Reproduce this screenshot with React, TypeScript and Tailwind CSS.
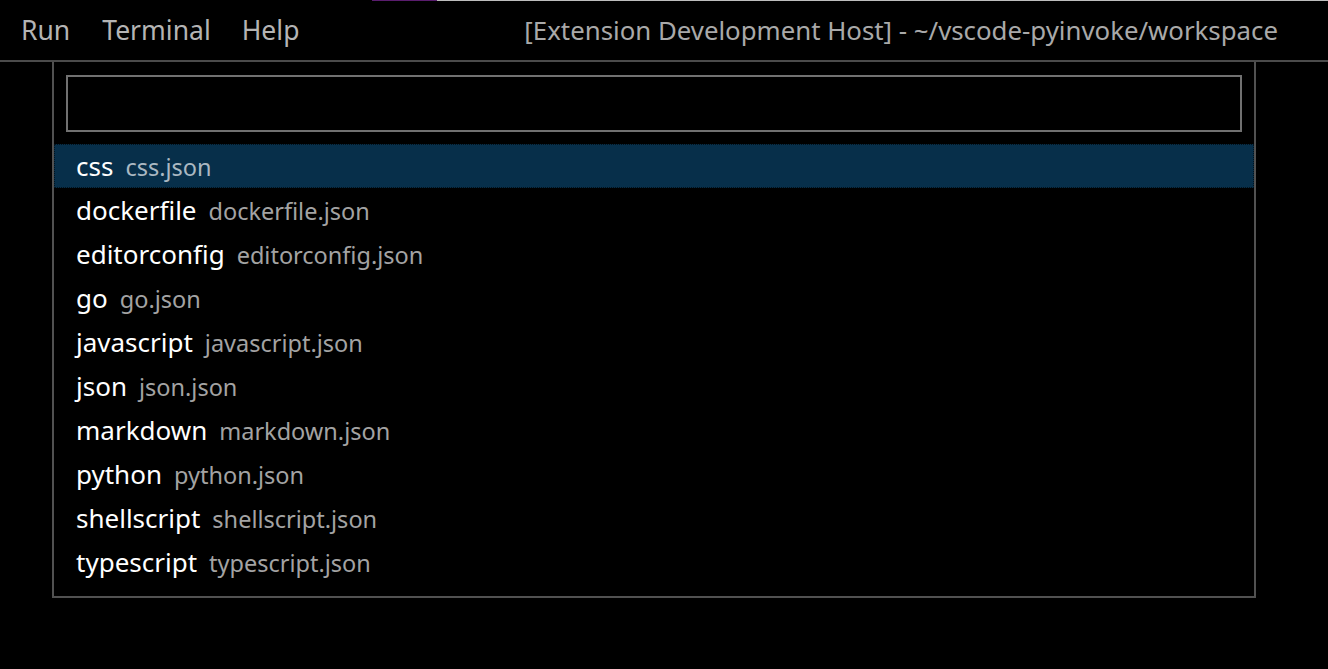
const items: [string, string][] = [
  ['css', 'css.json'],
  ['dockerfile', 'dockerfile.json'],
  ['editorconfig', 'editorconfig.json'],
  ['go', 'go.json'],
  ['javascript', 'javascript.json'],
  ['json', 'json.json'],
  ['markdown', 'markdown.json'],
  ['python', 'python.json'],
  ['shellscript', 'shellscript.json'],
  ['typescript', 'typescript.json'],
];

const font = "font-['Noto_Sans','Lato',sans-serif]";

function MenuBar() {
  return (
    <div>
      <div className="flex h-px">
        <div className="w-[372px]" />
        <div className="w-[65px] bg-[#5a1d6e]" />
        <div className="flex-1 bg-[#bdbdbd]" />
      </div>
      <div className="flex h-[59px] items-center pt-[1px] pb-[1px] text-[26.5px] text-[#b4b4b4]">
        <span className="ml-[21px]">Run</span>
        <span className="ml-[32px]">Terminal</span>
        <span className="ml-[31px]">Help</span>
        <span className="ml-auto mr-[50px] text-[25.8px] text-[#a9a9a9]">
          [Extension Development Host] - ~/vscode-pyinvoke/workspace
        </span>
      </div>
      <div className="h-[2px] bg-[#4b4b4b]" />
    </div>
  );
}

function QuickPick() {
  return (
    <div className="ml-[52px] w-[1204px] border-2 border-t-0 border-[#515151] pb-[12px]">
      <div className="px-[12px] pt-[13px] pb-[12px]">
        <div className="h-[57px] border-2 border-[#717171]" />
      </div>
      <div className="flex flex-col">
        {items.map(([label, desc], i) => (
          <div
            key={label}
            className={
              i === 0
                ? 'flex h-[44px] items-center bg-[#072f4a] pl-[22px] outline-1 outline-offset-[-1px] outline-dotted outline-[#02121c]'
                : 'flex h-[44px] items-center pl-[22px]'
            }
          >
            <div className="flex items-baseline gap-[12px]">
              <span className="text-[26px] text-white">{label}</span>
              <span className={i === 0 ? 'text-[23.5px] text-[#aab8c2]' : 'text-[23.5px] text-[#a3a3a3]'}>
                {desc}
              </span>
            </div>
          </div>
        ))}
      </div>
    </div>
  );
}

export default function App() {
  return (
    <div className={`h-[669px] w-full overflow-hidden bg-black ${font}`}>
      <MenuBar />
      <QuickPick />
    </div>
  );
}
